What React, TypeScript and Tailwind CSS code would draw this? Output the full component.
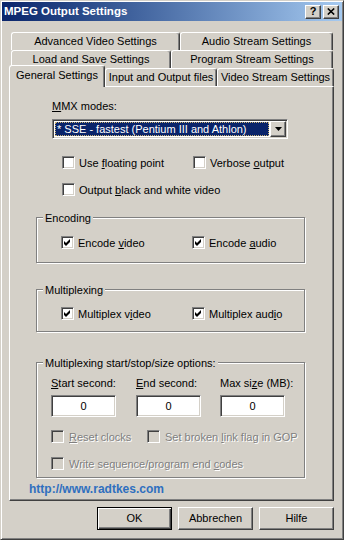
import React from "react";

const raised =
  "border border-t-white border-l-white border-r-[#404040] border-b-[#404040] shadow-[inset_-1px_-1px_#808080]";
const sunken =
  "border border-t-[#808080] border-l-[#808080] border-r-white border-b-white shadow-[inset_1px_1px_#404040,inset_-1px_-1px_#d4d0c8]";

function Box({ checked = false, disabled = false }: { checked?: boolean; disabled?: boolean }) {
  return (
    <span
      className={`w-[13px] h-[13px] shrink-0 flex items-center justify-center ${sunken} ${
        disabled ? "bg-[#d4d0c8]" : "bg-white"
      }`}
    >
      {checked && (
        <svg width="7" height="7" viewBox="0 0 7 7">
          <polygon points="0,2 2,4 6,0 6,3 2,7 0,5" fill={disabled ? "#808080" : "#000"} />
        </svg>
      )}
    </span>
  );
}

function CheckItem({
  children,
  checked,
  disabled,
  className = "",
}: {
  children: React.ReactNode;
  checked?: boolean;
  disabled?: boolean;
  className?: string;
}) {
  return (
    <div className={`flex items-center h-[13px] gap-[4px] ${className}`}>
      <Box checked={checked} disabled={disabled} />
      <span
        className={`whitespace-nowrap pt-[1px] ${
          disabled ? "text-[#808080] [text-shadow:1px_1px_0_#fff]" : ""
        }`}
      >
        {children}
      </span>
    </div>
  );
}

function Group({
  title,
  className = "",
  children,
}: {
  title: string;
  className?: string;
  children: React.ReactNode;
}) {
  return (
    <div
      className={`relative ml-[26px] w-[269px] border border-[#808080] shadow-[1px_1px_0_#fff,inset_1px_1px_0_#fff] ${className}`}
    >
      <span className="absolute -top-[6px] left-[6px] px-[2px] bg-[#d4d0c8] leading-[13px] whitespace-nowrap">
        {title}
      </span>
      {children}
    </div>
  );
}

function Tab({ label, w }: { label: string; w: string }) {
  return (
    <div
      className={`${w} h-[18px] shrink-0 flex items-center justify-center bg-[#d4d0c8] border-t border-l border-r border-t-white border-l-white border-r-[#404040] rounded-t-[3px] shadow-[inset_-1px_0_#808080] whitespace-nowrap`}
    >
      {label}
    </div>
  );
}

function Field({ value }: { value: string }) {
  return (
    <div className={`w-[65px] h-[22px] bg-white flex items-center justify-center ${sunken}`}>
      {value}
    </div>
  );
}

export default function App() {
  return (
    <div className="w-[344px] h-[540px] bg-[#d4d0c8] font-['Liberation_Sans',Arial,sans-serif] text-[11px] leading-[13px] text-black border border-t-[#d4d0c8] border-l-[#d4d0c8] border-r-[#404040] border-b-[#404040] shadow-[inset_1px_1px_#fff,inset_-1px_-1px_#808080] p-[1px] flex flex-col overflow-hidden">
      {/* title bar */}
      <div className="h-[19px] shrink-0 flex items-center bg-gradient-to-r from-[#0a246a] to-[#a6caf0] pl-[2px] pr-[3px]">
        <span className="text-white font-bold text-[11.5px] flex-1">MPEG Output Settings</span>
        <div className="flex gap-[2px]">
          <div className={`w-[16px] h-[14px] bg-[#d4d0c8] flex items-center justify-center font-bold text-[11px] leading-none ${raised}`}>
            ?
          </div>
          <div className={`w-[16px] h-[14px] bg-[#d4d0c8] flex items-center justify-center ${raised}`}>
            <svg width="8" height="7" viewBox="0 0 8 7">
              <path d="M0.8 0.5L7.2 6.5M7.2 0.5L0.8 6.5" stroke="#000" strokeWidth="1.6" />
            </svg>
          </div>
        </div>
      </div>

      {/* tabs */}
      <div className="mt-[11px] ml-[9px] flex">
        <Tab label="Advanced Video Settings" w="w-[169px]" />
        <Tab label="Audio Stream Settings" w="w-[153px]" />
      </div>
      <div className="ml-[9px] flex">
        <Tab label="Load and Save Settings" w="w-[160px]" />
        <Tab label="Program Stream Settings" w="w-[162px]" />
      </div>
      <div className="ml-[7px] -mt-[3px] h-[22px] flex items-start relative z-10">
        <div className="w-[96px] h-[22px] shrink-0 flex items-center justify-center pb-[2px] bg-[#d4d0c8] border-t border-l border-r border-t-white border-l-white border-r-[#404040] rounded-t-[3px] shadow-[inset_-1px_0_#808080]">
          General Settings
        </div>
        <div className="mt-[3px] flex">
          <Tab label="Input and Output files" w="w-[112px]" />
          <Tab label="Video Stream Settings" w="w-[117px]" />
        </div>
      </div>

      {/* panel */}
      <div className="ml-[7px] -mt-[1px] w-[325px] h-[415px] shrink-0 flex flex-col border border-t-white border-l-white border-r-[#404040] border-b-[#404040] shadow-[inset_-1px_-1px_#808080]">
        <div className="ml-[42px] mt-[13px]">
          <u>M</u>MX modes:
        </div>
        <div className={`ml-[42px] mt-[6px] w-[236px] h-[20px] bg-white flex p-[1px] ${sunken}`}>
          <div className="flex-1 p-[1px] flex">
            <div className="flex-1 bg-[#0a246a] text-white border border-dotted border-[#c8b070] flex items-center pl-[1px] whitespace-nowrap">
              * SSE - fastest (Pentium III and Athlon)
            </div>
          </div>
          <div className={`w-[16px] bg-[#d4d0c8] flex items-center justify-center ${raised}`}>
            <svg width="7" height="4" viewBox="0 0 7 4">
              <polygon points="0,0 7,0 3.5,4" fill="#000" />
            </svg>
          </div>
        </div>

        <div className="ml-[52px] mt-[17px] flex">
          <CheckItem className="w-[131px]">
            Use <u>f</u>loating point
          </CheckItem>
          <CheckItem>
            Verbose <u>o</u>utput
          </CheckItem>
        </div>
        <div className="ml-[52px] mt-[14px] flex">
          <CheckItem>
            Output <u>b</u>lack and white video
          </CheckItem>
        </div>

        <Group title="Encoding" className="mt-[21px] h-[46px] pt-[18px]">
          <div className="ml-[24px] flex">
            <CheckItem checked className="w-[131px]">
              Encode <u>v</u>ideo
            </CheckItem>
            <CheckItem checked>
              Encode <u>a</u>udio
            </CheckItem>
          </div>
        </Group>

        <Group title="Multiplexing" className="mt-[26px] h-[43px] pt-[17px]">
          <div className="ml-[24px] flex">
            <CheckItem checked className="w-[131px]">
              Multiplex v<u>i</u>deo
            </CheckItem>
            <CheckItem checked>
              Multiplex aud<u>i</u>o
            </CheckItem>
          </div>
        </Group>

        <Group title="Multiplexing start/stop/size options:" className="mt-[30px] h-[116px] pt-[14px]">
          <div className="ml-[14px] flex">
            <div className="w-[85px]">
              <u>S</u>tart second:
            </div>
            <div className="w-[84px]">
              <u>E</u>nd second:
            </div>
            <div>
              Max si<u>z</u>e (MB):
            </div>
          </div>
          <div className="ml-[14px] mt-[5px] flex">
            <div className="w-[85px]">
              <Field value="0" />
            </div>
            <div className="w-[84px]">
              <Field value="0" />
            </div>
            <Field value="0" />
          </div>
          <div className="ml-[14px] mt-[13px] flex">
            <CheckItem disabled className="w-[96px] gap-[5px]">
              <u>R</u>eset clocks
            </CheckItem>
            <CheckItem disabled className="gap-[5px]">
              Set broken <u>l</u>ink flag in GOP
            </CheckItem>
          </div>
          <div className="ml-[14px] mt-[14px] flex">
            <CheckItem disabled className="gap-[5px]">
              Write sequence/program end <u>c</u>odes
            </CheckItem>
          </div>
        </Group>

        <div className="ml-[19px] mt-[4px] text-[12px] leading-[14px] font-bold text-[#2f6fbf]">
          http://www.radtkes.com
        </div>
      </div>

      {/* buttons */}
      <div className="mt-[6px] pr-[8px] flex justify-end gap-[6px]">
        <div className="w-[75px] h-[23px] flex items-center justify-center bg-[#d4d0c8] border border-black shadow-[inset_1px_1px_#fff,inset_-1px_-1px_#404040,inset_-2px_-2px_#808080]">
          OK
        </div>
        <div className={`w-[75px] h-[23px] flex items-center justify-center bg-[#d4d0c8] ${raised}`}>
          Abbrechen
        </div>
        <div className={`w-[75px] h-[23px] flex items-center justify-center bg-[#d4d0c8] ${raised}`}>
          Hilfe
        </div>
      </div>
    </div>
  );
}
